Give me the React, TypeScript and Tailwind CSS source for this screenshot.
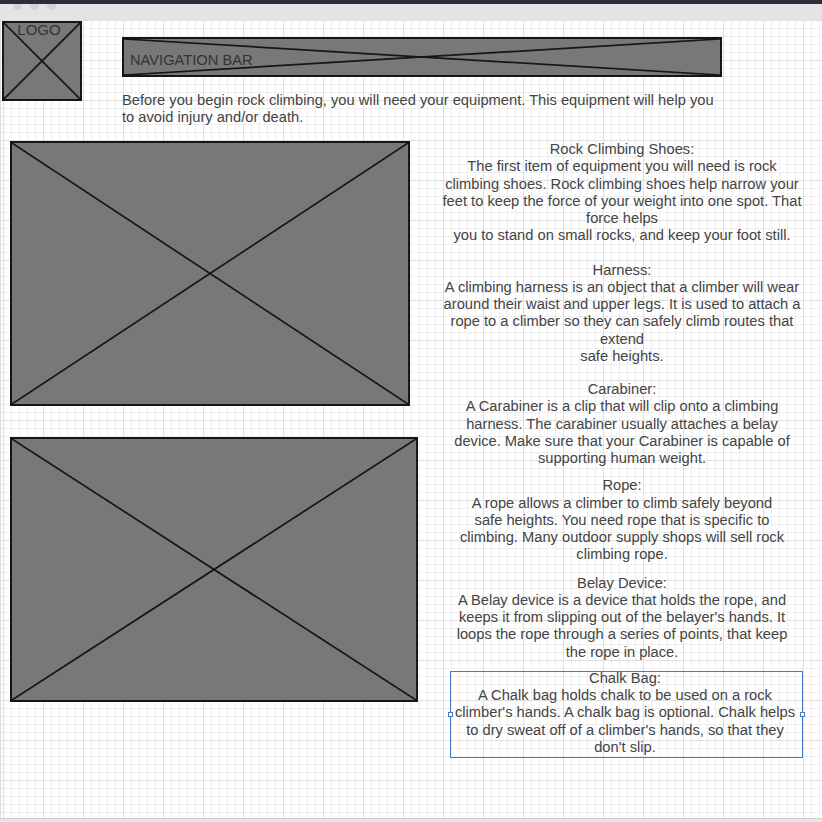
import React from 'react';

const Placeholder = ({ className, children }: { className: string; children?: React.ReactNode }) => {
  return (
    <div className={`relative bg-[#787878] border-2 border-[#161616] ${className}`}>
      <svg className="absolute inset-0 w-full h-full" viewBox="0 0 100 100" preserveAspectRatio="none">
        <line x1="0" y1="0" x2="100" y2="100" stroke="#161616" strokeWidth="1.7" vectorEffect="non-scaling-stroke" />
        <line x1="100" y1="0" x2="0" y2="100" stroke="#161616" strokeWidth="1.7" vectorEffect="non-scaling-stroke" />
      </svg>
      {children}
    </div>
  );
};

const Block = ({ lines, className = '' }: { lines: string[]; className?: string }) => (
  <div className={`text-center whitespace-nowrap ${className}`}>
    {lines.map((l, i) => (
      <div key={i}>{l}</div>
    ))}
  </div>
);

const App = () => {
  return (
    <div className="w-[822px] h-[822px] overflow-hidden bg-white font-['Liberation_Sans',Arial,sans-serif] text-[14.7px] leading-[17.25px] text-[#444]">
      {/* window chrome */}
      <div className="h-[4px] bg-[#2b2e37]" />
      <div className="h-[16px] bg-[#e4e4e4] flex gap-[8px] pl-[13px] overflow-hidden">
        <div className="-mt-[3px] w-[9px] h-[9px] rounded-full bg-[#d3d3d3]" />
        <div className="-mt-[3px] w-[9px] h-[9px] rounded-full bg-[#d3d3d3]" />
        <div className="-mt-[3px] w-[9px] h-[9px] rounded-full bg-[#d3d3d3]" />
      </div>

      {/* canvas */}
      <div className="h-[798px] border-l border-[#dcdcdc] bg-[linear-gradient(to_right,#e0e0e0_1px,transparent_1px),linear-gradient(to_bottom,#e0e0e0_1px,transparent_1px),linear-gradient(to_right,#efefef_1px,transparent_1px),linear-gradient(to_bottom,#efefef_1px,transparent_1px)] bg-[size:40px_40px,40px_40px,8px_8px,8px_8px] bg-[position:2px_0,0_0,2px_0,0_0]">
        <div className="flex items-start h-[121px]">
          <Placeholder className="ml-[1px] mt-[1px] w-[80px] h-[80px]">
            <div className="relative -mt-[2px] text-center pr-[6px] text-[15px] leading-[17px] text-[#333]">LOGO</div>
          </Placeholder>
          <div className="ml-[40px] mt-[17px]">
            <Placeholder className="w-[600px] h-[40px]">
              <div className="relative pl-[6px] pt-[13px] text-[#333]">NAVIGATION BAR</div>
            </Placeholder>
            <p className="mt-[15px] whitespace-nowrap">
              Before you begin rock climbing, you will need your equipment. This equipment will help you
              <br />
              to avoid injury and/or death.
            </p>
          </div>
        </div>

        <div className="flex items-start">
          <div className="pl-[9px] flex flex-col">
            <Placeholder className="w-[400px] h-[265px]" />
            <Placeholder className="mt-[31px] w-[408px] h-[265px]" />
          </div>

          <div className="ml-[22px] w-[364px] flex flex-col">
            <Block
              lines={[
                'Rock Climbing Shoes:',
                'The first item of equipment you will need is rock',
                'climbing shoes. Rock climbing shoes help narrow your',
                'feet to keep the force of your weight into one spot. That',
                'force helps',
                'you to stand on small rocks, and keep your foot still.',
              ]}
            />
            <Block
              className="mt-[17px]"
              lines={[
                'Harness:',
                'A climbing harness is an object that a climber will wear',
                'around their waist and upper legs. It is used to attach a',
                'rope to a climber so they can safely climb routes that',
                'extend',
                'safe heights.',
              ]}
            />
            <Block
              className="mt-[16px]"
              lines={[
                'Carabiner:',
                'A Carabiner is a clip that will clip onto a climbing',
                'harness. The carabiner usually attaches a belay',
                'device. Make sure that your Carabiner is capable of',
                'supporting human weight.',
              ]}
            />
            <Block
              className="mt-[10px]"
              lines={[
                'Rope:',
                'A rope allows a climber to climb safely beyond',
                'safe heights. You need rope that is specific to',
                'climbing. Many outdoor supply shops will sell rock',
                'climbing rope.',
              ]}
            />
            <Block
              className="mt-[11px]"
              lines={[
                'Belay Device:',
                'A Belay device is a device that holds the rope, and',
                "keeps it from slipping out of the belayer's hands. It",
                'loops the rope through a series of points, that keep',
                'the rope in place.',
              ]}
            />
            <div className="relative mt-[10px] ml-[10px] w-[353px] h-[87px] border border-[#4a78c2]">
              <Block
                className="-mt-[2px] pr-[3px]"
                lines={[
                  'Chalk Bag:',
                  'A Chalk bag holds chalk to be used on a rock',
                  "climber's hands. A chalk bag is optional. Chalk helps",
                  "to dry sweat off of a climber's hands, so that they",
                  "don't slip.",
                ]}
              />
              <div className="absolute -left-[3px] top-[40px] w-[5px] h-[5px] bg-white border border-[#4a78c2]" />
              <div className="absolute -right-[3px] top-[40px] w-[5px] h-[5px] bg-white border border-[#4a78c2]" />
            </div>
          </div>
        </div>
      </div>

      {/* bottom edge */}
      <div className="h-[4px] bg-[#e6e6e6] border-t border-[#d0d0d0]" />
    </div>
  );
};

export default App;
